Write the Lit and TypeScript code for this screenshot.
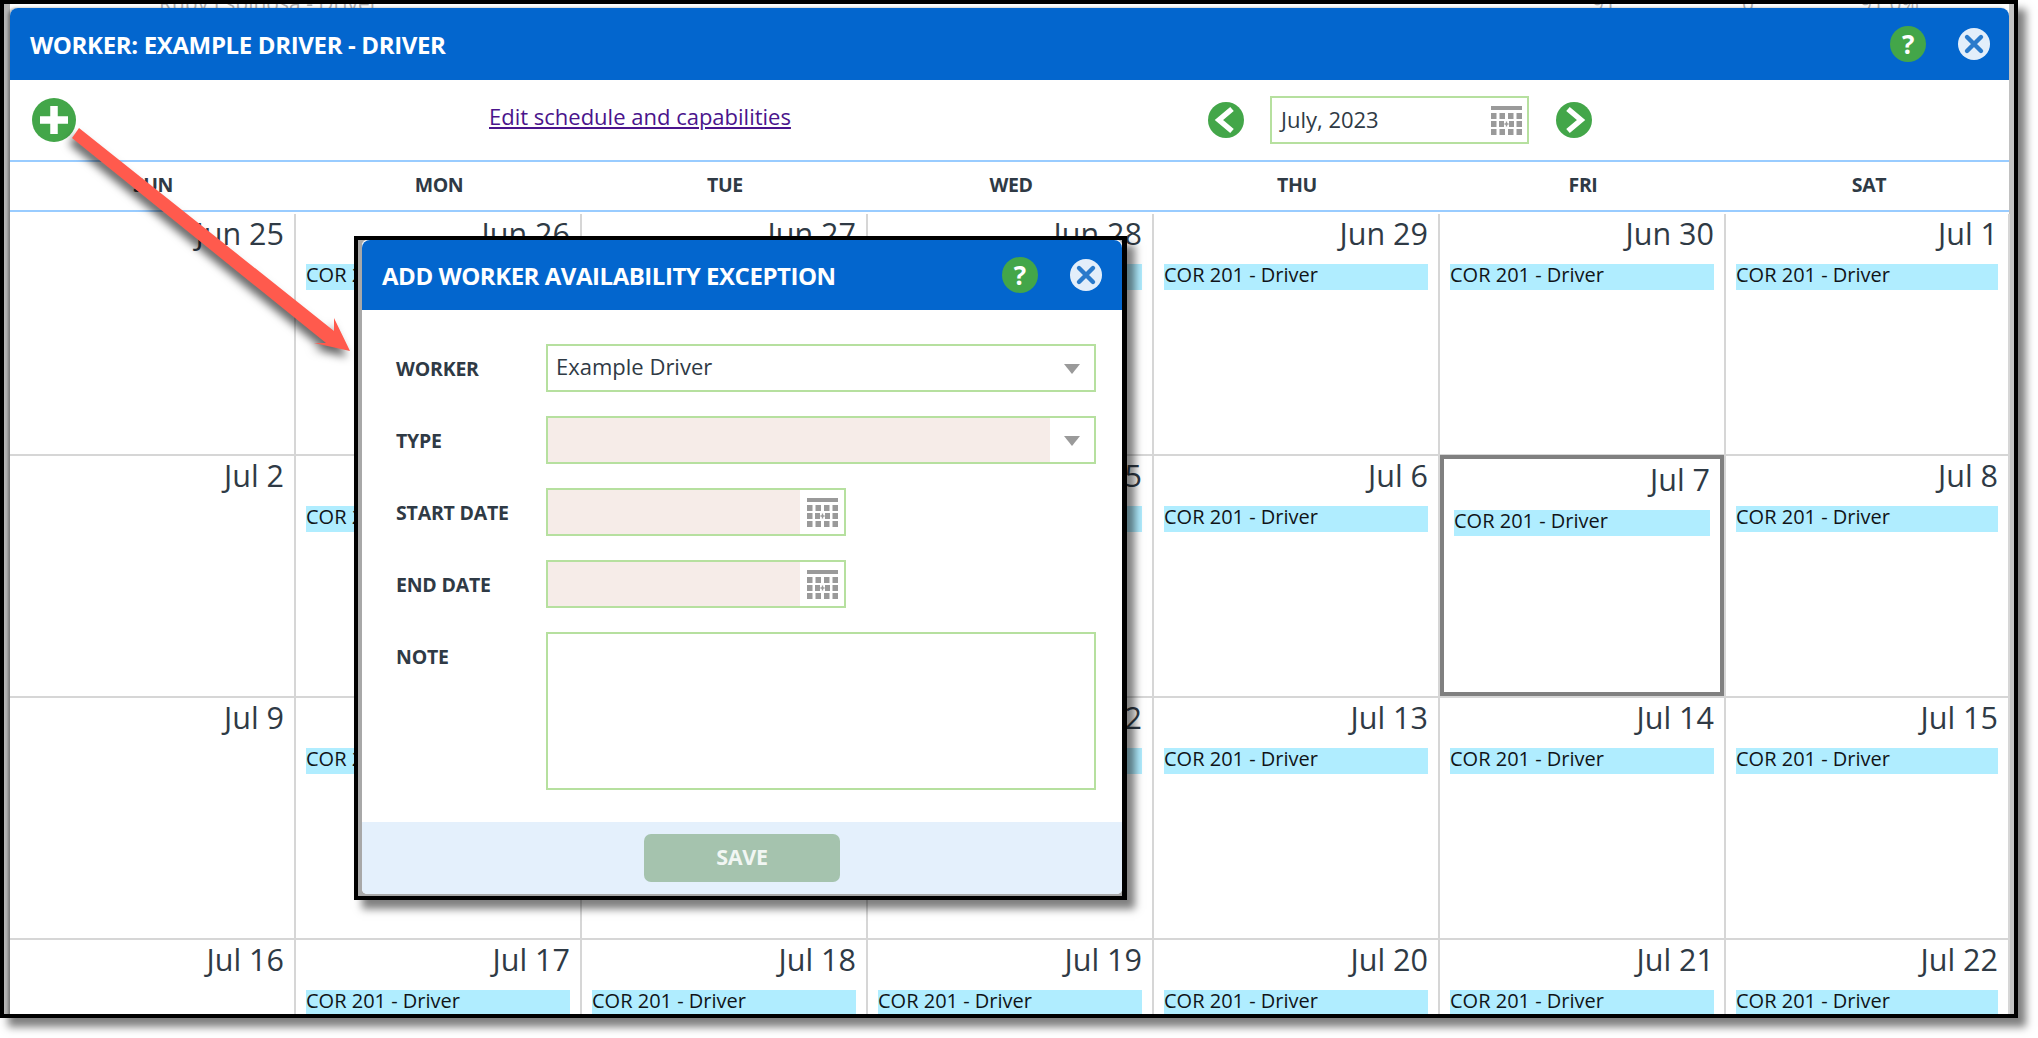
import { LitElement, html, css, svg } from "lit";
import { customElement } from "lit/decorators.js";
import { classMap } from "lit/directives/class-map.js";

const DAYS = ["SUN", "MON", "TUE", "WED", "THU", "FRI", "SAT"];
const WEEKS: string[][] = [
  ["Jun 25", "Jun 26", "Jun 27", "Jun 28", "Jun 29", "Jun 30", "Jul 1"],
  ["Jul 2", "Jul 3", "Jul 4", "Jul 5", "Jul 6", "Jul 7", "Jul 8"],
  ["Jul 9", "Jul 10", "Jul 11", "Jul 12", "Jul 13", "Jul 14", "Jul 15"],
  ["Jul 16", "Jul 17", "Jul 18", "Jul 19", "Jul 20", "Jul 21", "Jul 22"],
];

const calendarIcon = html`<svg class="cal" viewBox="0 0 31 29" width="31" height="29" aria-hidden="true">
  <rect x="0" y="0" width="31" height="4" fill="#9a9a9a"></rect>
  ${[7, 15, 23].map((y) =>
    [0, 8.5, 17, 25.5].map((x) =>
      svg`<rect x=${y === 15 && x === 8.5 ? 8 : y === 15 && x === 17 ? 18 : x} y=${y} width=${y === 15 && (x === 8.5 || x === 17) ? 5 : 5.5} height="6" fill="#9a9a9a"></rect>`
    )
  )}
  <path d="M15.5 15.5v5M13.5 18h4" stroke="#9a9a9a" stroke-width="1.4" fill="none"></path>
</svg>`;

const closeIcon = html`<svg class="close" viewBox="0 0 32 32" width="32" height="32" aria-hidden="true">
  <circle cx="16" cy="16" r="16" fill="#e3eefa"></circle>
  <path d="M9 9l14 14M23 9L9 23" stroke="#2a7acb" stroke-width="4.4" stroke-linecap="round" fill="none"></path>
</svg>`;

const chevron = (d: string) => html`<svg class="nav" viewBox="0 0 36 36" width="36" height="36" aria-hidden="true">
  <circle cx="18" cy="18" r="18" fill="#43a649"></circle>
  <path d=${d} stroke="#fff" stroke-width="5.5" fill="none"></path>
</svg>`;

@customElement("app-root")
export class AppRoot extends LitElement {
  static styles = css`
    :host {
      display: block;
      position: relative;
      width: 2038px;
      height: 1038px;
      background: #fff;
      overflow: hidden;
      font-family: "Open Sans", "Noto Sans", sans-serif;
      color: #2f3a45;
    }
    .frame {
      position: relative;
      box-sizing: border-box;
      width: 2018px;
      height: 1018px;
      border: 4px solid #000;
      padding: 4px 5px 0 6px;
      overflow: hidden;
      background: linear-gradient(to right, #b5b5b5 6px, #fff 6px, #fff 2005px, #c4c4c4 2005px);
      box-shadow: 8px 9px 8px rgba(0, 0, 0, 0.5);
    }
    .ghost {
      position: absolute;
      top: -13px;
      font-size: 21px;
      line-height: 24px;
      color: #b0b0b0;
      white-space: nowrap;
    }
    .window {
      position: relative;
      height: 1100px;
      background: #fff;
      border-radius: 8px 8px 0 0;
      box-shadow: -2px 0 3px rgba(0, 0, 0, 0.35);
    }
    .head {
      display: flex;
      align-items: center;
      height: 72px;
      background: #0366ce;
      border-radius: 8px 8px 0 0;
      color: #fff;
      font-weight: 700;
      font-size: 24px;
      letter-spacing: -0.35px;
      padding-left: 20px;
      padding-right: 19px;
    }
    .head .title {
      flex: 1;
      white-space: nowrap;
    }
    .help {
      display: flex;
      align-items: center;
      justify-content: center;
      width: 36px;
      height: 36px;
      border-radius: 50%;
      background: #43a649;
      color: #fff;
      font-weight: 700;
      font-size: 26px;
      line-height: 36px;
    }
    .close {
      display: block;
    }
    .main-help {
      margin-right: 32px;
    }
    .toolbar {
      display: flex;
      align-items: center;
      height: 80px;
    }
    .left {
      width: 479px;
      padding-left: 22px;
      box-sizing: border-box;
    }
    .linkcol {
      width: 719px;
      padding-bottom: 8px;
    }
    .link {
      font-size: 22px;
      color: #4a148c;
      text-decoration: underline;
    }
    .plus,
    .nav {
      display: block;
    }
    .date-box {
      box-sizing: border-box;
      display: flex;
      align-items: center;
      justify-content: space-between;
      width: 259px;
      height: 48px;
      margin: 0 27px 0 26px;
      padding: 0 5px 0 9px;
      border: 2px solid #b6e09f;
      font-size: 22px;
    }
    .date-box span {
      padding-bottom: 3px;
    }
    .weekdays {
      display: grid;
      grid-template-columns: repeat(7, 286px);
      height: 52px;
      box-sizing: border-box;
      border-top: 2px solid #99ccff;
      border-bottom: 2px solid #99ccff;
      margin-bottom: 2px;
    }
    .weekdays div {
      text-align: center;
      font-weight: 700;
      font-size: 19.5px;
      letter-spacing: -0.4px;
      line-height: 46px;
    }
    .grid {
      display: grid;
      grid-template-columns: repeat(6, 286px) 284px;
      grid-auto-rows: 242px;
    }
    .cell {
      display: flex;
      min-width: 0;
      border-right: 2px solid #d6d6d6;
      border-bottom: 2px solid #d6d6d6;
    }
    .inner {
      flex: 1;
      min-width: 0;
      padding: 0 10px;
    }
    .inner.today {
      position: relative;
      margin: -1px 0 0;
      padding: 1px 10px 0;
      border: 4px solid #808080;
      background: #fff;
    }
    .date {
      text-align: right;
      font-size: 30.5px;
      line-height: 38px;
      height: 40px;
    }
    .bar {
      margin-top: 10px;
      height: 26px;
      line-height: 22px;
      font-size: 20px;
      background: #b0edff;
      color: #101418;
      white-space: nowrap;
      overflow: hidden;
    }
    .modal {
      position: absolute;
      left: 354px;
      top: 236px;
      box-sizing: border-box;
      width: 773px;
      height: 664px;
      border: solid #000;
      border-width: 4px 5px 4px 4px;
      padding: 0 0 2px 4px;
      background: #a8a8a8;
      box-shadow: 8px 9px 8px rgba(0, 0, 0, 0.5);
    }
    .dialog {
      display: flex;
      flex-direction: column;
      height: 100%;
      background: #fff;
      border-radius: 5px;
      overflow: hidden;
    }
    .dialog .head {
      height: 70px;
      flex: none;
      padding-right: 20px;
      letter-spacing: -0.47px;
    }
    .dialog .help {
      margin-right: 32px;
      letter-spacing: 0;
    }
    .form {
      flex: 1;
      display: grid;
      grid-template-columns: 150px 1fr;
      grid-auto-rows: 48px;
      row-gap: 24px;
      padding: 34px 26px 0 34px;
    }
    .label {
      font-weight: 700;
      font-size: 19.5px;
      letter-spacing: -0.2px;
      line-height: 50px;
    }
    .field {
      box-sizing: border-box;
      display: flex;
      align-items: stretch;
      height: 48px;
      border: 2px solid #b6e09f;
      font-size: 22px;
    }
    .field.short {
      width: 300px;
    }
    .field.note {
      height: 158px;
    }
    .value {
      flex: 1;
      padding-left: 8px;
      line-height: 41px;
    }
    .value.req {
      background: #f6ece8;
    }
    .addon {
      display: flex;
      align-items: center;
      justify-content: center;
      width: 44px;
      flex: none;
    }
    .arrow {
      width: 0;
      height: 0;
      margin-top: 1px;
      border-left: 8.5px solid transparent;
      border-right: 8.5px solid transparent;
      border-top: 10px solid #9a9a9a;
    }
    .footer {
      flex: none;
      display: flex;
      justify-content: center;
      align-items: center;
      height: 72px;
      background: #e4f0fc;
    }
    .save {
      width: 196px;
      height: 48px;
      border: 0;
      border-radius: 7px;
      padding: 0 0 3px;
      background: #a5c3ae;
      color: #f1f6f3;
      font: 700 21.5px "Open Sans", sans-serif;
      letter-spacing: -0.3px;
      margin: 0;
    }
    .pointer {
      position: absolute;
      left: 0;
      top: 0;
      width: 400px;
      height: 400px;
      filter: drop-shadow(-3px 6px 4px rgba(0, 0, 0, 0.6));
    }
  `;

  private day(label: string) {
    const today = label === "Jul 7";
    const hasBar = !["Jun 25", "Jul 2", "Jul 9", "Jul 16"].includes(label);
    return html`<div class="cell">
      <div class=${classMap({ inner: true, today })}>
        <div class="date">${label}</div>
        ${hasBar ? html`<div class="bar">COR 201 - Driver</div>` : ""}
      </div>
    </div>`;
  }

  render() {
    return html`
      <div class="frame">
        <span class="ghost" style="left:155px">Ruby Espinosa - Driver</span>
        <span class="ghost" style="left:1588px">91</span>
        <span class="ghost" style="left:1738px">0</span>
        <span class="ghost" style="left:1856px">91.0%</span>
        <div class="window">
          <div class="head">
            <div class="title">WORKER: EXAMPLE DRIVER - DRIVER</div>
            <div class="help main-help">?</div>
            ${closeIcon}
          </div>
          <div class="toolbar">
            <div class="left">
              <svg class="plus" viewBox="0 0 44 44" width="44" height="44" aria-hidden="true">
                <circle cx="22" cy="22" r="22" fill="#43a649"></circle>
                <path d="M22 8v28M8 22h28" stroke="#fff" stroke-width="7.5" fill="none"></path>
              </svg>
            </div>
            <div class="linkcol"><span class="link">Edit schedule and capabilities</span></div>
            ${chevron("M24 7L11 18l13 11")}
            <div class="date-box"><span>July, 2023</span>${calendarIcon}</div>
            ${chevron("M12 7l13 11-13 11")}
          </div>
          <div class="weekdays">${DAYS.map((d) => html`<div>${d}</div>`)}</div>
          <div class="grid">${WEEKS.flat().map((d) => this.day(d))}</div>
        </div>
      </div>

      <svg class="pointer" viewBox="0 0 400 400" aria-hidden="true">
        <polygon points="79,128 334,331 334,318 350,351 314,343 326,343 72,138" fill="#ff5a4d"></polygon>
      </svg>

      <div class="modal">
        <div class="dialog">
          <div class="head">
            <div class="title">ADD WORKER AVAILABILITY EXCEPTION</div>
            <div class="help">?</div>
            ${closeIcon}
          </div>
          <div class="form">
            <div class="label">WORKER</div>
            <div class="field">
              <div class="value">Example Driver</div>
              <div class="addon"><div class="arrow"></div></div>
            </div>
            <div class="label">TYPE</div>
            <div class="field">
              <div class="value req"></div>
              <div class="addon"><div class="arrow"></div></div>
            </div>
            <div class="label">START DATE</div>
            <div class="field short">
              <div class="value req"></div>
              <div class="addon">${calendarIcon}</div>
            </div>
            <div class="label">END DATE</div>
            <div class="field short">
              <div class="value req"></div>
              <div class="addon">${calendarIcon}</div>
            </div>
            <div class="label">NOTE</div>
            <div class="field note"></div>
          </div>
          <div class="footer"><button class="save">SAVE</button></div>
        </div>
      </div>
    `;
  }
}
